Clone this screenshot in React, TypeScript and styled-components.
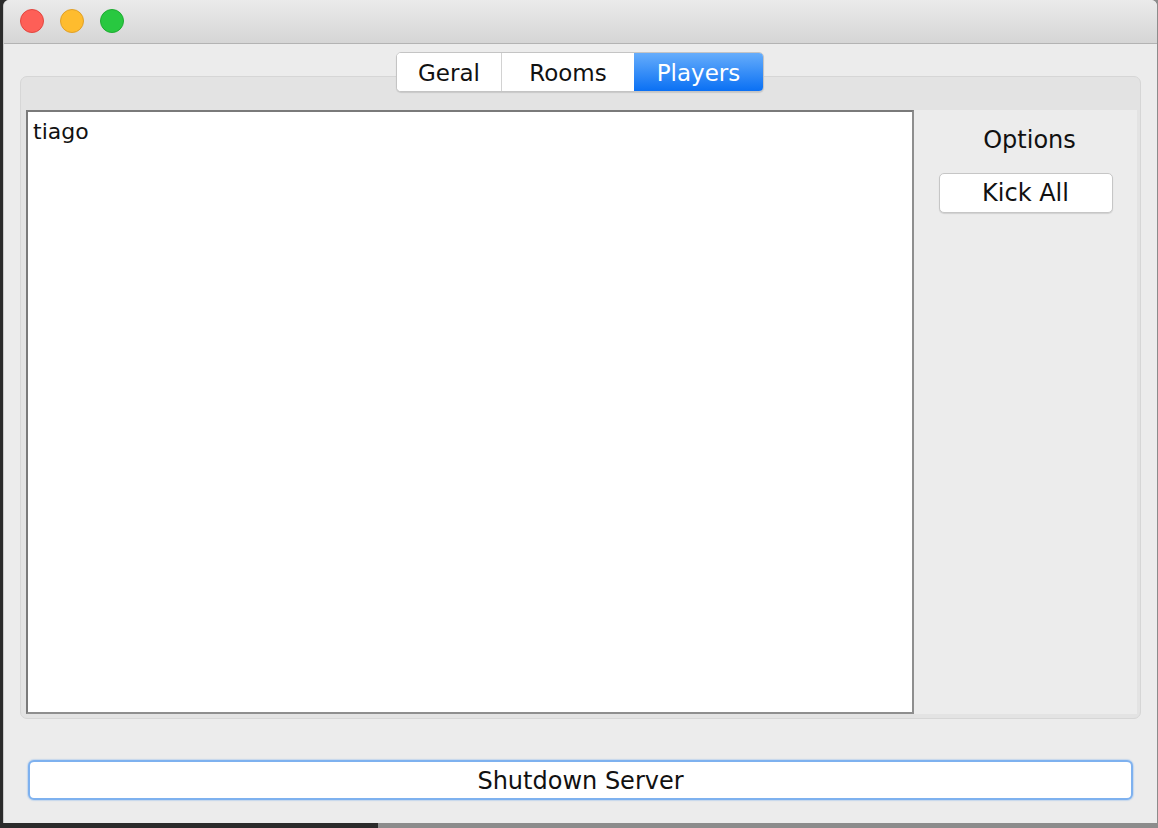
import React from "react";
import styled, { createGlobalStyle } from "styled-components";

const Global = createGlobalStyle`
  html, body { margin: 0; padding: 0; }
  body { font-family: "DejaVu Sans", "Liberation Sans", sans-serif; }
  * { box-sizing: border-box; }
`;

const Desktop = styled.div`
  width: 1158px;
  height: 828px;
  padding: 0 1px 5px 3px;
  background: linear-gradient(to right, #2b2b2b 378px, #8c8c8c 378px);
  display: flex;
  overflow: hidden;
`;

const Window = styled.div`
  flex: 1;
  display: flex;
  flex-direction: column;
  background: #ececec;
  border-radius: 6px 6px 0 0;
  border-left: 1px solid #c9c9c9;
  overflow: hidden;
`;

const TitleBar = styled.div`
  height: 44px;
  flex: none;
  display: flex;
  align-items: center;
  gap: 16px;
  padding: 0 0 1px 16px;
  background: linear-gradient(to bottom, #ebebeb, #d5d5d5);
  border-bottom: 1px solid #b3b3b3;
`;

const Light = styled.span<{ $fill: string; $edge: string }>`
  width: 24px;
  height: 24px;
  border-radius: 50%;
  background: ${(p) => p.$fill};
  border: 1px solid ${(p) => p.$edge};
`;

const Content = styled.div`
  flex: 1;
  display: flex;
  flex-direction: column;
  padding: 8px 24px 23px 16px;
`;

const TabsRow = styled.div`
  display: flex;
  justify-content: center;
  position: relative;
  z-index: 1;
  margin-left: 7px;
`;

const Segmented = styled.div`
  display: flex;
  height: 40px;
  border: 1px solid #c4c4c4;
  border-radius: 5px;
  background: #fff;
  box-shadow: 0 1px 1px rgba(0, 0, 0, 0.12);
  overflow: hidden;
`;

const Tab = styled.div<{ $w: number; $active?: boolean }>`
  width: ${(p) => p.$w}px;
  display: flex;
  align-items: center;
  justify-content: center;
  padding-top: 2px;
  font-size: 23px;
  color: ${(p) => (p.$active ? "#fff" : "#111")};
  background: ${(p) =>
    p.$active ? "linear-gradient(to bottom, #66adfb, #0a70f4)" : "#fff"};
  border-left: ${(p) => (p.$active ? "none" : "1px solid #d2d2d2")};
  &:first-child { border-left: none; }
`;

const Panel = styled.div`
  margin-top: -16px;
  margin-right: -8px;
  height: 643px;
  display: flex;
  padding: 33px 3px 4px 5px;
  background: #e3e3e3;
  border: 1px solid #d6d6d6;
  border-radius: 7px;
`;

const PanelInner = styled.div`
  flex: 1;
  display: flex;
  background: #ececec;
`;

const List = styled.div`
  width: 888px;
  background: #fff;
  border: 2px solid #8e8e8e;
  border-top-color: #7a7a7a;
  border-left-color: #7a7a7a;
  padding: 6px 5px;
  font-size: 22px;
  color: #111;
  line-height: 28px;
`;

const Side = styled.div`
  flex: 1;
  display: flex;
  flex-direction: column;
  align-items: center;
  padding-top: 15px;
`;

const SideTitle = styled.div`
  font-size: 24px;
  color: #111;
  line-height: 30px;
  margin-left: 8px;
`;

const SmallButton = styled.button`
  margin-top: 18px;
  width: 174px;
  height: 40px;
  font-family: inherit;
  font-size: 24px;
  color: #111;
  background: #fff;
  border: 1px solid #c6c6c6;
  border-radius: 5px;
  box-shadow: 0 1px 1px rgba(0, 0, 0, 0.12);
  padding: 0;
`;

const WideButton = styled.button`
  margin-top: auto;
  margin-left: 8px;
  height: 40px;
  font-family: inherit;
  font-size: 24px;
  color: #111;
  background: #fff;
  border: 2px solid #7eb1ef;
  box-shadow: 0 0 1px 1px rgba(126, 177, 239, 0.35);
  border-radius: 6px;
  padding: 2px 0 0;
`;

export default function App() {
  return (
    <>
      <Global />
      <Desktop>
        <Window>
          <TitleBar>
            <Light $fill="#fe5f57" $edge="#e2463f" />
            <Light $fill="#febc2e" $edge="#e0a028" />
            <Light $fill="#28c840" $edge="#1eab31" />
          </TitleBar>
          <Content>
            <TabsRow>
              <Segmented>
                <Tab $w={104}>Geral</Tab>
                <Tab $w={133}>Rooms</Tab>
                <Tab $w={129} $active>
                  Players
                </Tab>
              </Segmented>
            </TabsRow>
            <Panel>
              <PanelInner>
                <List>tiago</List>
                <Side>
                  <SideTitle>Options</SideTitle>
                  <SmallButton>Kick All</SmallButton>
                </Side>
              </PanelInner>
            </Panel>
            <WideButton>Shutdown Server</WideButton>
          </Content>
        </Window>
      </Desktop>
    </>
  );
}
